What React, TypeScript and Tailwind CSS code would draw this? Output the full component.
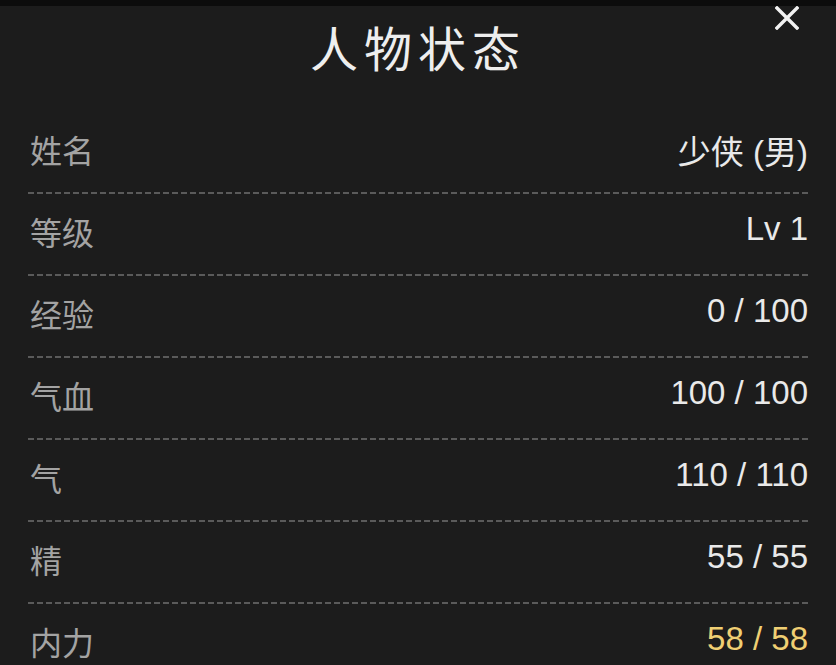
import React from "react";

const rows: { label: string; value: string; gold?: boolean; cjk?: boolean }[] = [
  { label: "姓名", value: "少侠 (男)", cjk: true },
  { label: "等级", value: "Lv 1" },
  { label: "经验", value: "0 / 100" },
  { label: "气血", value: "100 / 100" },
  { label: "气", value: "110 / 110" },
  { label: "精", value: "55 / 55" },
  { label: "内力", value: "58 / 58", gold: true },
];

export default function App() {
  return (
    <div
      className="w-[836px] h-[665px] overflow-hidden bg-[#1c1c1c] flex flex-col"
      style={{ fontFamily: '"Liberation Sans", "Noto Sans CJK SC", sans-serif' }}
    >
      <div className="h-[6px] bg-[#0c0c0c] shrink-0" />
      <div className="relative h-[106px] shrink-0 flex justify-center">
        <h1 className="mt-[17px] text-[48px] leading-[56px] tracking-[6px] text-[#eeeeee] font-normal">
          人物状态
        </h1>
        <button className="absolute right-[36px] top-[-1px] w-[26px] h-[26px] flex items-center justify-center">
          <svg width="24" height="24" viewBox="0 0 24 24">
            <path d="M2 2 L22 22 M22 2 L2 22" stroke="#f2f2f2" strokeWidth="3.4" strokeLinecap="square" />
          </svg>
        </button>
      </div>
      <div className="mx-[28px] flex flex-col">
        {rows.map((r, i) => (
          <div key={i} className="flex flex-col">
            <div className="flex items-center justify-between h-[80px] pl-[2px]">
              <span className="text-[32px] text-[#a3a3a3]">{r.label}</span>
              <span
                className={`text-[33px] ${r.cjk ? "mt-[2px]" : "mb-[10px]"} ${
                  r.gold ? "text-[#f0cf73]" : "text-[#e9e9e9]"
                }`}
              >
                {r.value}
              </span>
            </div>
            <div className="h-[2px] bg-[repeating-linear-gradient(90deg,#5a5a5a_0_6px,transparent_6px_9px)]" />
          </div>
        ))}
      </div>
    </div>
  );
}
